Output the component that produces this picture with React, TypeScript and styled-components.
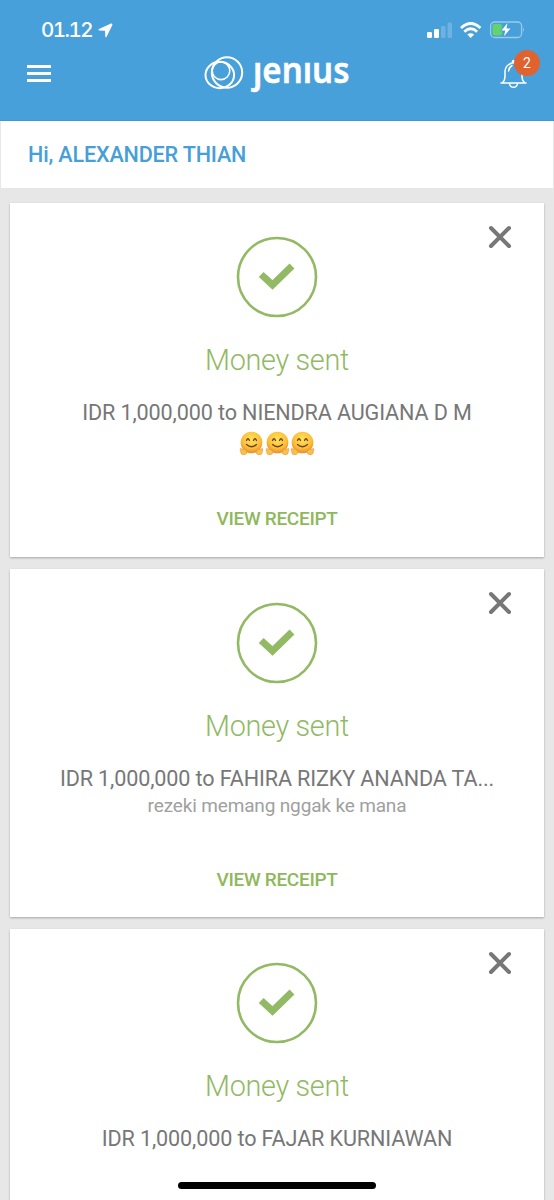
import React from "react";
import styled, { createGlobalStyle } from "styled-components";

const GlobalStyle = createGlobalStyle`
  * { box-sizing: border-box; }
  body { margin: 0; background: #e7e7e7; font-family: Roboto, sans-serif; }
  button { border: 0; padding: 0; background: none; font: inherit; display: block; }
  svg { display: block; overflow: visible; }
`;

const Screen = styled.div`
  position: relative;
  width: 554px;
  height: 1200px;
  overflow: hidden;
  background: #e7e7e7;
`;

const Header = styled.header`
  height: 121px;
  background: #48a0da;
  border-bottom: 1px solid #4496cd;
  color: #fff;
`;

const StatusBar = styled.div`
  height: 48px;
  padding: 13px 30px 0 41px;
  display: flex;
  justify-content: space-between;
`;

const Clock = styled.div`
  display: flex;
  gap: 5px;
  height: 34px;
  align-items: center;
  font: 500 20.5px/34px Inter, sans-serif;
`;

const Time = styled.span`
  width: 52px;
  font-variant-numeric: tabular-nums;
  letter-spacing: -1.5px;
  line-height: 36px;
`;

const StatusIconGroup = styled.div`
  padding-top: 6px;
`;

const NavBar = styled.div`
  height: 50px;
  padding: 0 14px 0 27px;
  display: grid;
  grid-template-columns: 100px 1fr 100px;
  grid-template-rows: 50px;
  align-items: center;
`;

const MenuButton = styled.button`
  width: 24px;
  display: grid;
  gap: 4px;
`;

const MenuLine = styled.span`
  height: 3px;
  background: #fff;
`;

const Brand = styled.div`
  justify-self: center;
  margin-right: 13px;
`;

const BellButton = styled.button`
  position: relative;
  justify-self: end;
  width: 40px;
  height: 40px;
  display: flex;
  align-items: flex-start;
  padding-top: 6px;
  color: #fff;
`;

const Badge = styled.span`
  position: absolute;
  top: -3px;
  right: 0;
  width: 26px;
  height: 26px;
  border-radius: 50%;
  background: #e0622f;
  font: 400 14px/26px Roboto, sans-serif;
  text-align: center;
`;

const Greeting = styled.div`
  height: 67px;
  margin: 0 1px;
  padding-left: 27px;
  background: #fff;
  color: #489fd8;
  font-size: 21.6px;
  font-weight: 500;
  letter-spacing: -0.18px;
  line-height: 68px;
`;

const Feed = styled.main`
  padding: 15px 10px 0;
  display: flex;
  flex-direction: column;
  gap: 12px;
`;

const Card = styled.article<{ $height: number }>`
  position: relative;
  flex: none;
  height: ${(p) => p.$height}px;
  padding-top: 33px;
  background: #fff;
  box-shadow: 0 1px 2px rgba(0, 0, 0, 0.28);
  display: flex;
  flex-direction: column;
  align-items: center;
`;

const CloseButton = styled.button`
  position: absolute;
  top: 22px;
  right: 32px;
`;

const Title = styled.h2`
  margin: 23px 0 0;
  color: #92b964;
  font-size: 28.8px;
  font-weight: 300;
  letter-spacing: -0.3px;
  line-height: 39px;
`;

const Summary = styled.p`
  margin: 19px 0 0;
  color: #777;
  font-size: 21.6px;
  letter-spacing: -0.13px;
  line-height: 28px;
  white-space: nowrap;
`;

const Note = styled.div`
  height: 27px;
  color: #a0a0a0;
  font-size: 19px;
  letter-spacing: -0.15px;
  line-height: 25px;
`;

const Emojis = styled.div`
  height: 32px;
  display: flex;
  align-items: center;
  gap: 0.5px;
`;

const Receipt = styled.button`
  margin-top: 46px;
  color: #8fb85c;
  font-size: 19px;
  font-weight: 500;
  letter-spacing: -0.3px;
  line-height: 28px;
`;

const HomeIndicator = styled.div`
  position: absolute;
  left: 178px;
  bottom: 11px;
  width: 198px;
  height: 7px;
  border-radius: 4px;
  background: #000;
`;

const StatusIcons = () => (
  <svg width="100" height="20" viewBox="0 0 100 20" fill="#fff">
    <rect x="3" y="13" width="5" height="6" rx="1.3" />
    <rect x="10" y="10" width="5" height="9" rx="1.3" />
    <rect x="17" y="7" width="4.5" height="12" rx="1.3" opacity="0.2" />
    <rect x="23.5" y="3.500" width="4.500" height="15.500" rx="1.3" opacity="0.2" />
    <g fill="none" stroke="#fff" strokeWidth="2.8">
      <path d="M37 9q9.700-9 19.400 0" />
      <path d="M40.300 12.700q6.400-5.800 12.800 0" />
    </g>
    <path d="M43.300 15.600q3.400-2.600 6.800 0l-3.400 3.400z" />
    <rect x="66.600" y="3" width="31" height="15.500" rx="4" fill="none" stroke="#fff" strokeOpacity="0.45" strokeWidth="1.3" />
    <path d="M99 8q1.500 2.500 0 5z" opacity="0.5" />
    <rect x="68.500" y="5" width="9.500" height="11.500" rx="2" fill="#62d46c" />
    <path d="M83.500 4 77.500 11.500h3.800l-1.300 5.800 6.500-7.800h-4z" stroke="#48a0da" strokeWidth="1.600" paintOrder="stroke" />
  </svg>
);

const Logo = () => (
  <svg width="148" height="66" viewBox="0 -12 148 66" role="img" aria-label="jenius">
    <g fill="none" stroke="#fff" strokeWidth="2">
      <circle cx="24" cy="20.500" r="15.200" />
      <ellipse cx="16.800" cy="23" rx="14.300" ry="13.200" />
      <circle cx="18" cy="18.800" r="8.800" strokeWidth="1.600" />
    </g>
    <text x="50" y="30.500" fill="#fff" stroke="#fff" strokeWidth=".5" strokeLinejoin="round" fontFamily="Noto Sans, sans-serif" fontWeight="600" fontSize="36.500" textLength="96.500" lengthAdjust="spacingAndGlyphs">
      ȷenıus
    </text>
  </svg>
);

const Bell = () => (
  <svg width="28" height="30" viewBox="0 0 28 30" fill="none" stroke="#fff" strokeWidth="1.500" strokeLinecap="round">
    <path d="M1 24h25M2.500 23.500Q5 21.500 5 17V12Q5.500 5.500 13.500 3.500Q21.500 5.500 22 12V17Q22 21.500 24.500 23.500" />
    <path d="M8.500 12Q8.800 8.500 12 6.500M9.500 24.500q.5 3.800 4 3.800t4-3.800" />
    <circle cx="13.500" cy="2.500" r="1" />
  </svg>
);

const HugEmoji = () => (
  <svg width="25" height="25" viewBox="0 0 25 25">
    <defs>
      <radialGradient id="face" cx=".5" cy=".35" r=".65">
        <stop offset="0" stopColor="#ffe45a" />
        <stop offset=".65" stopColor="#fdbe38" />
        <stop offset="1" stopColor="#e88c2b" />
      </radialGradient>
    </defs>
    <circle cx="12.500" cy="11.500" r="10.800" fill="url(#face)" />
    <g fill="none" stroke="#69411c" strokeLinecap="round" strokeWidth="1.300">
      <path d="M7.500 9.500q1.500-3.500 3 0M14.500 9.500q1.500-3.500 3 0M7.500 13.500q5 4.500 10 0" />
    </g>
    <g fill="#f9c050" stroke="#dd9436" strokeWidth=".6">
      <path d="M1.500 17.500q1.500 0 2.500 1.500l.5-1.200q1.200-.4 1.400.9 2.600 1.200 2.100 3.300-1.500 2.300-4.700 1.600-2-1-1.400-2.300-1.200-2-.4-3.800z" />
      <path d="M23.500 17.500q-1.500 0-2.500 1.500l-.5-1.200q-1.200-.4-1.400.9-2.600 1.200-2.100 3.300 1.500 2.300 4.700 1.600 2-1 1.400-2.300 1.200-2 .4-3.800z" />
    </g>
  </svg>
);

const SuccessIcon = () => (
  <svg width="82" height="82" viewBox="0 0 82 82" fill="none" stroke="#92b964">
    <circle cx="41" cy="41" r="39" strokeWidth="2.600" />
    <path d="M25.200 38.500 36.500 48.900 56 30" strokeWidth="7" strokeLinejoin="miter" />
  </svg>
);

const CloseIcon = () => (
  <svg width="24" height="24" viewBox="0 0 24 24" stroke="#777" strokeWidth="4" strokeLinecap="round">
    <path d="m3 3 18 18M21 3 3 21" />
  </svg>
);

type Transfer = { to: string; height: number; note?: string; hugs?: number; receipt?: boolean };

const transfers: Transfer[] = [
  { to: "NIENDRA AUGIANA D M", height: 354, hugs: 3, receipt: true },
  { to: "FAHIRA RIZKY ANANDA TA...", height: 348, note: "rezeki memang nggak ke mana", receipt: true },
  { to: "FAJAR KURNIAWAN", height: 348 },
];

const TransferCard = ({ to, height, note, hugs, receipt }: Transfer) => (
  <Card $height={height}>
    <CloseButton aria-label="Close"><CloseIcon /></CloseButton>
    <SuccessIcon />
    <Title>Money sent</Title>
    <Summary>IDR 1,000,000 to {to}</Summary>
    {hugs && (
      <Emojis>{Array.from({ length: hugs }, (_, i) => <HugEmoji key={i} />)}</Emojis>
    )}
    {note && <Note>{note}</Note>}
    {receipt && <Receipt>VIEW RECEIPT</Receipt>}
  </Card>
);

export default function App() {
  return (
    <Screen>
      <GlobalStyle />
      <Header>
        <StatusBar>
          <Clock>
            <Time>01.12</Time>
            <svg width="15" height="15" viewBox="0 0 15 15" fill="#fff"><path d="M13 .5 1 6q-1.400 1 .2 1.500L7 7.800l.3 5.900q.4 1.300 1.300 0L14.400 2Q14.700.100 13 .5z" /></svg>
          </Clock>
          <StatusIconGroup><StatusIcons /></StatusIconGroup>
        </StatusBar>
        <NavBar>
          <MenuButton aria-label="Menu"><MenuLine /><MenuLine /><MenuLine /></MenuButton>
          <Brand><Logo /></Brand>
          <BellButton aria-label="Notifications"><Bell /><Badge>2</Badge></BellButton>
        </NavBar>
      </Header>
      <Greeting>Hi, ALEXANDER THIAN</Greeting>
      <Feed>
        {transfers.map((t) => <TransferCard key={t.to} {...t} />)}
      </Feed>
      <HomeIndicator />
    </Screen>
  );
}
